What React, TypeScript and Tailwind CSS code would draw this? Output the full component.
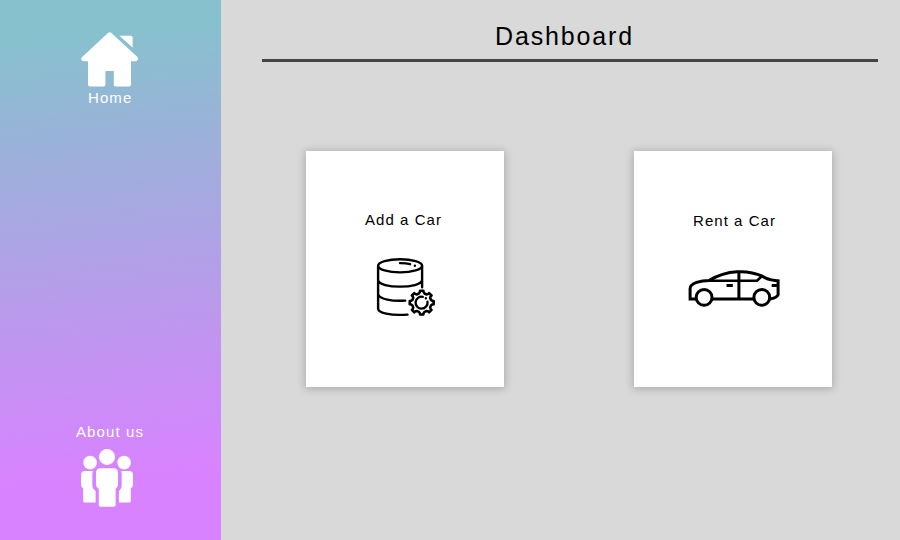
import React from "react";

const FONT = "font-['Liberation_Sans',Arial,sans-serif]";

function HomeIcon() {
  return (
    <svg width="58" height="56" viewBox="0 0 58 56" fill="#fff" className="block">
      <path d="M27 1.1Q28.7-.4 30.4 1.1L56.2 24.8Q57.3 26 56.9 27.5Q56.3 29.2 54.5 29.2H50V52.6Q50 54.6 48 54.6H34.8Q32.8 54.6 32.8 52.6V39H24.4V52.6Q24.4 54.6 22.4 54.6H9Q7 54.6 7 52.6V29.2H3Q1 29.2.3 27.8Q-.2 26.3 1.2 25.1Z" />
      <path d="M38.4 3.8H49.8Q51.6 3.8 51.6 5.6V15.6Z" />
    </svg>
  );
}

function PeopleIcon() {
  return (
    <svg width="52" height="59" viewBox="0 0 52 59" fill="#fff" className="block">
      <circle cx="9.1" cy="13.6" r="6.8" />
      <circle cx="43.1" cy="13.6" r="6.8" />
      <ellipse cx="26" cy="8" rx="8.1" ry="7.9" />
      <path d="M4 22H12Q11.3 23.6 11.3 25.5V35.5Q11.3 40 14.6 42V53.6H3.8Q2.2 53.6 2.2 52V39.5Q0 38 0 35.5V26Q0 22 4 22Z" />
      <path d="M48 22H40Q40.7 23.6 40.7 25.5V35.5Q40.7 40 37.9 42V53.6H48.2Q49.8 53.6 49.8 52V39.5Q52 38 52 35.5V26Q52 22 48 22Z" />
      <path d="M19.5 19.2H32.5Q37 19.2 37 24V35.5Q37 38.6 34.6 39.8V56Q34.6 57.8 32.8 57.8H19.6Q17.8 57.8 17.8 56V39.8Q15 38.6 15 35.5V24Q15 19.2 19.5 19.2Z" />
    </svg>
  );
}

function DatabaseIcon() {
  return (
    <svg width="60" height="60" viewBox="0 0 60 60" fill="none" stroke="#000" strokeWidth="2.4" strokeLinecap="round" strokeLinejoin="round" className="block">
      <ellipse cx="24.1" cy="8.8" rx="22" ry="6.6" />
      <path d="M2.1 9V51.5C2.1 56 14 58.8 31.5 57.6M46.1 9V30.2M2.1 23.2C3 31.8 45 31.8 46.1 23.2M2.1 37.2C3.5 42.2 16 44.4 29.2 43.6" />
      <path d="M24 6.1Q30 6 34 7.2M38.9 8.6V8.7" />
      <g transform="translate(45.7 45.7) scale(1.07) translate(-44.6 -43.9)">
        <path d="M42 35.3Q43.2 34 43 32.8H46.2Q46 34 47.2 35.3L49.3 36.2Q51 36.1 51.5 34.9L53.8 37.2Q52.6 37.8 52.5 39.4L53.3 41.3Q54.6 42.6 55.8 42.4V45.4Q54.6 45.2 53.3 46.4L52.5 48.4Q52.6 50 53.8 50.6L51.5 52.9Q51 51.7 49.3 51.6L47.2 52.5Q46 53.8 46.2 55H43Q43.2 53.8 42 52.5L39.9 51.6Q38.2 51.7 37.7 52.9L35.4 50.6Q36.6 50 36.7 48.4L35.9 46.4Q34.6 45.2 33.4 45.4V42.4Q34.6 42.6 35.9 41.3L36.7 39.4Q36.6 37.8 35.4 37.2L37.7 34.9Q38.2 36.1 39.9 36.2Z" />
      </g>
      <path d="M46.8 39.8A6 6 0 1 0 51.5 44.8M49.9 41.2V41.3" />
    </svg>
  );
}

function CarIcon() {
  return (
    <svg width="92" height="39" viewBox="0 0 92 39" fill="none" stroke="#000" strokeWidth="3" className="block">
      <path d="M8.5 31.1H2.1V20.5C2.1 15 13 12.4 21.3 12.4C39 1.5 60 1.5 74.8 8.4C80 12 84 11.9 90.1 12.8V26.8Q89 29.9 81.5 31.1M23.5 31.1H65.7M50.9 4V31.1" />
      <path d="M21.3 12.8H69L74.3 7.7" strokeWidth="2.6" />
      <path d="M38.5 17.4H44.8M83.7 17.4H90" />
      <circle cx="16.1" cy="29.4" r="7.9" />
      <circle cx="73.8" cy="29.4" r="7.9" />
    </svg>
  );
}

export default function App() {
  return (
    <div className={`flex h-[540px] w-[900px] overflow-hidden bg-[#d9d9d9] text-black ${FONT}`}>
      <nav className="flex h-full w-[221px] flex-col justify-between bg-[linear-gradient(175deg,#87c1cd_7%,#d982ff_88%)] pt-8 pb-[32px] text-[15px] leading-[18px] text-white">
        <a className="flex flex-col">
          <span className="ml-[81px]"><HomeIcon /></span>
          <span className="mt-px ml-[88px] tracking-[1.1px]">Home</span>
        </a>
        <a className="flex flex-col">
          <span className="ml-[76px] tracking-[1.1px]">About us</span>
          <span className="mt-[8px] ml-[81px]"><PeopleIcon /></span>
        </a>
      </nav>
      <main className="flex flex-1 flex-col pr-[22px] pl-[41px]">
        <header className="h-[62px] border-b-[3px] border-[#444] pt-[22px] pl-[233px] text-[25px] leading-7 tracking-[1.85px]">
          <h1>Dashboard</h1>
        </header>
        <section className="mt-[89px] flex gap-[130px] pl-[44px] text-[15px] leading-[18px]">
          <button className="flex h-[236px] w-[198px] flex-col items-start bg-white pt-[60px] shadow-[0_1px_8px_1px_rgba(0,0,0,0.22)]">
            <span className="ml-[59px] tracking-[1.05px]">Add a Car</span>
            <span className="mt-[28px] ml-[70px]"><DatabaseIcon /></span>
          </button>
          <button className="flex h-[236px] w-[198px] flex-col items-start bg-white pt-[61px] shadow-[0_1px_8px_1px_rgba(0,0,0,0.22)]">
            <span className="ml-[59px] tracking-[1.05px]">Rent a Car</span>
            <span className="mt-[38px] ml-[54px]"><CarIcon /></span>
          </button>
        </section>
      </main>
    </div>
  );
}
